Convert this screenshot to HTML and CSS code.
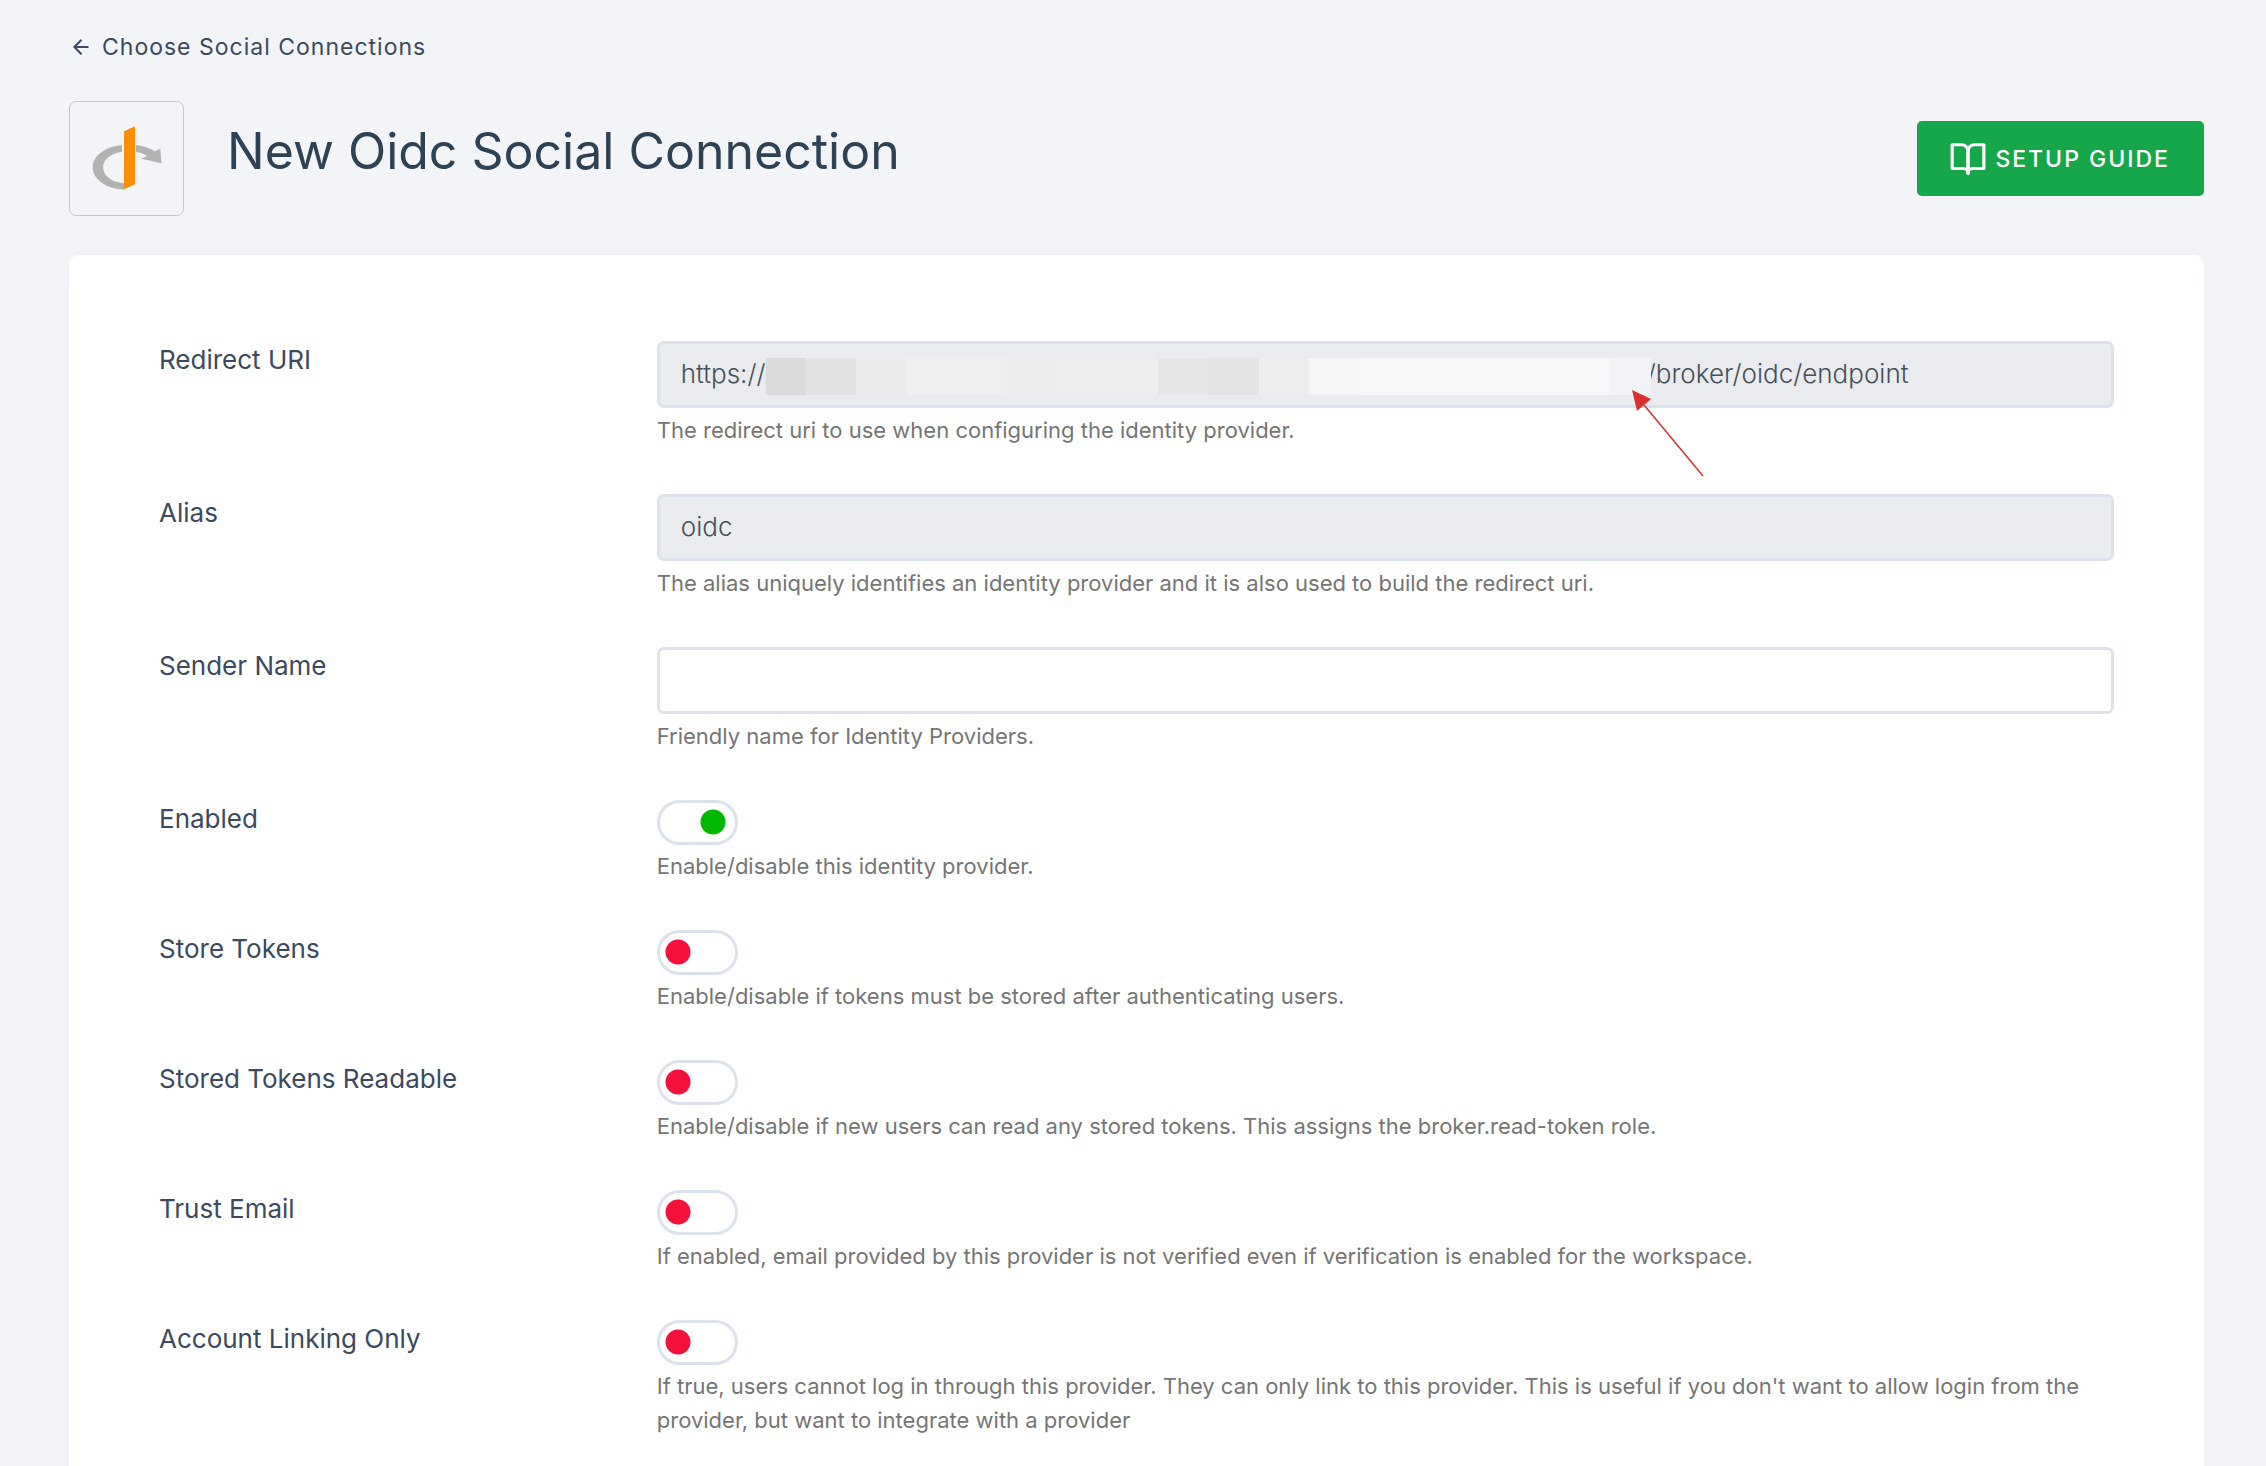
FILE: index.html
```html
<!DOCTYPE html>
<html lang="en">
<head>
<meta charset="utf-8">
<meta name="viewport" content="width=device-width, initial-scale=1">
<title>New Oidc Social Connection</title>
<link rel="stylesheet" href="styles.css">
</head>
<body>
<main class="page">
  <a class="back" href="#">
    <svg class="back-icon" viewBox="0 0 16 16" aria-hidden="true"><path d="M8.500 .8 1.300 8l7.200 7.200M1.300 8H15.500"/></svg>
    Choose Social Connections
  </a>
  <header class="header">
    <div class="logo">
      <svg viewBox="60 276 339 339" aria-hidden="true">
        <path fill="#b2b2b2" d="M216 405C166 410 128 437 128 472C128 508 168 537 222 539V520C185 517 159 497 159 472C159 449 182 430 216 425Z"/>
        <path fill="#b2b2b2" d="M258 405C280 408 299 414 314 424L331 416L334 460L274 446L291 437C282 431 271 427 258 425Z"/>
        <path fill="#ff8e00" d="M222 364L255 349V523L222 538Z"/>
      </svg>
    </div>
    <h1 class="title">New Oidc Social Connection</h1>
    <button class="guide" type="button">
      <svg class="guide-icon" viewBox="0 0 24 24" aria-hidden="true"><path d="M2 3h6a4 4 0 0 1 4 4v14a3 3 0 0 0-3-3H2z"/><path d="M22 3h-6a4 4 0 0 0-4 4v14a3 3 0 0 1 3-3h7z"/></svg>
      SETUP GUIDE
    </button>
  </header>
  <form class="card">
    <div class="row">
      <label class="label" for="redirect">Redirect URI</label>
      <div class="field">
        <div class="control uri">
          <input class="uri-start" id="redirect" value="https://" readonly>
          <span class="redacted"></span>
          <input class="uri-end" aria-label="Redirect URI path" value="/broker/oidc/endpoint" readonly>
          <svg class="pointer" viewBox="0 0 74 90" aria-hidden="true"><path d="M13 16 72 87" stroke="#dc3030" stroke-width="1.500"/><path d="M1 1 20 10 6 22Z" fill="#dc3030"/></svg>
        </div>
        <p class="help">The redirect uri to use when configuring the identity provider.</p>
      </div>
    </div>
    <div class="row">
      <label class="label" for="alias">Alias</label>
      <div class="field">
        <input class="control" id="alias" value="oidc" readonly>
        <p class="help">The alias uniquely identifies an identity provider and it is also used to build the redirect uri.</p>
      </div>
    </div>
    <div class="row">
      <label class="label" for="sender">Sender Name</label>
      <div class="field">
        <input class="control editable" id="sender">
        <p class="help">Friendly name for Identity Providers.</p>
      </div>
    </div>
    <div class="row">
      <label class="label" for="enabled">Enabled</label>
      <div class="field">
        <input class="toggle" type="checkbox" id="enabled" checked>
        <p class="help">Enable/disable this identity provider.</p>
      </div>
    </div>
    <div class="row">
      <label class="label" for="store">Store Tokens</label>
      <div class="field">
        <input class="toggle" type="checkbox" id="store">
        <p class="help">Enable/disable if tokens must be stored after authenticating users.</p>
      </div>
    </div>
    <div class="row">
      <label class="label" for="readable">Stored Tokens Readable</label>
      <div class="field">
        <input class="toggle" type="checkbox" id="readable">
        <p class="help">Enable/disable if new users can read any stored tokens. This assigns the broker.read-token role.</p>
      </div>
    </div>
    <div class="row">
      <label class="label" for="trust">Trust Email</label>
      <div class="field">
        <input class="toggle" type="checkbox" id="trust">
        <p class="help">If enabled, email provided by this provider is not verified even if verification is enabled for the workspace.</p>
      </div>
    </div>
    <div class="row">
      <label class="label" for="linking">Account Linking Only</label>
      <div class="field">
        <input class="toggle" type="checkbox" id="linking">
        <p class="help">If true, users cannot log in through this provider. They can only link to this provider. This is useful if you don't want to allow login from the provider, but want to integrate with a provider</p>
      </div>
    </div>
  </form>
</main>
</body>
</html>
```
FILE: styles.css
```css
* {
  box-sizing: border-box;
}

body {
  margin: 0;
  background: #f3f4f8;
  color: #3b4a60;
  font-family: Inter, "Liberation Sans", sans-serif;
}

.page {
  padding: 29px 62px 0 69px;
}

.back {
  display: inline-flex;
  align-items: center;
  gap: 13px;
  padding-left: 4px;
  color: #3b4a60;
  font-size: 23px;
  line-height: 36px;
  letter-spacing: 1px;
  text-decoration: none;
}

.back-icon {
  width: 16px;
  height: 16px;
  fill: none;
  stroke: currentColor;
  stroke-width: 2;
}

.header {
  display: flex;
  align-items: center;
  margin: 36px 0 39px;
}

.logo {
  display: flex;
  width: 115px;
  height: 115px;
  border: 1px solid #c6c8cc;
  border-radius: 7px;
}

.title {
  margin: 0 auto 16px 43px;
  color: #2e4256;
  font-size: 50px;
  line-height: 60px;
  font-weight: 400;
}

.guide {
  display: flex;
  align-items: center;
  gap: 8px;
  height: 75px;
  padding: 0 34px 0 32px;
  border: 0;
  border-radius: 5px;
  background: #15a74a;
  color: #fff;
  font-family: inherit;
  font-size: 23px;
  font-weight: 500;
  letter-spacing: 2px;
}

.guide-icon {
  width: 38px;
  height: 38px;
  fill: none;
  stroke: currentColor;
  stroke-width: 2;
  stroke-linejoin: round;
}

.card {
  display: flex;
  flex-direction: column;
  gap: 47px;
  padding: 86px 90px;
  border-radius: 10px;
  background: #fff;
  box-shadow: 0 8px 16px #eef0f7;
}

.row {
  display: grid;
  grid-template-columns: 1fr 3fr;
  gap: 12px;
}

.label {
  font-size: 26px;
  line-height: 38px;
}

.field {
  display: flex;
  flex-direction: column;
  align-items: flex-start;
  gap: 4px;
}

.control {
  width: 100%;
  height: 67px;
  margin: 0 0 1px;
  padding: 0 21px 2px;
  border: 3px solid #dbe2ee;
  border-radius: 7px;
  background: #eaebef;
  color: #465058;
  font-family: inherit;
  font-size: 26px;
  font-weight: 300;
}

.editable {
  background: #fff;
}

.uri {
  position: relative;
  display: flex;
  align-items: center;
}

.uri-start,
.uri-end {
  min-width: 0;
  padding: 0;
  border: 0;
  background: none;
  color: inherit;
  font: inherit;
}

.uri-start {
  width: 85px;
}

.uri-end {
  flex: 1;
  text-indent: -4px;
}

.redacted {
  width: 885px;
  height: 37px;
  margin-top: 5px;
  background: linear-gradient(90deg, #d9dadc 40px, #e1e2e4 40px 90px, #e9eaec 90px 140px, #efeff1 140px 192px, #eeeff1 192px 241px, #ebecee 241px 290px, #ecedef 290px 392px, #e5e6e8 392px 443px, #e3e4e5 443px 493px, #ecedef 493px 543px, #f4f5f7 543px 594px, #f6f7f9 594px 844px, #f2f3f6 844px);
}

.pointer {
  position: absolute;
  top: 45px;
  left: 971px;
  width: 74px;
  height: 90px;
  fill: none;
}

.help {
  margin: 0;
  color: #757575;
  font-size: 22px;
  line-height: 34px;
}

.toggle {
  appearance: none;
  width: 81px;
  height: 45px;
  margin: 0;
  border: 3px solid #dbe2ee;
  border-radius: 23px;
  background: radial-gradient(circle at 18px 19px, #f4123d 12px, transparent 13px);
}

.toggle:checked {
  background: radial-gradient(circle at 53px 19px, #00b800 12px, transparent 13px);
}
```
